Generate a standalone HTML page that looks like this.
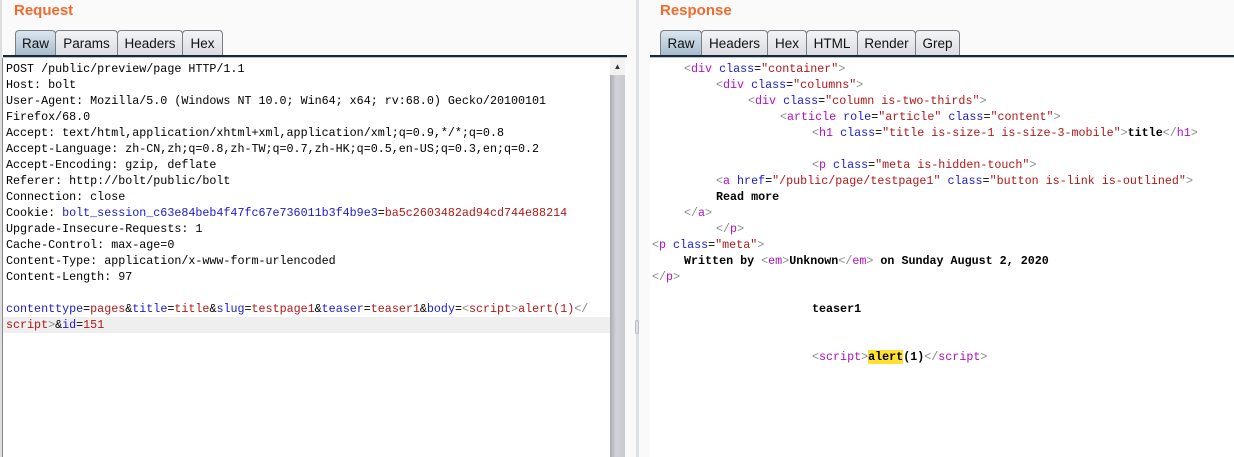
<!DOCTYPE html>
<html><head><style>
body{margin:0;width:1234px;height:457px;background:#fafafa;position:relative;overflow:hidden;font-family:"Liberation Sans",sans-serif}
.t{position:absolute;color:#f26a2e;font-weight:bold;font-size:15px;top:2px}
.tab{position:absolute;top:30px;height:25px;border:1px solid #7a7f86;border-bottom:none;border-radius:4px 4px 0 0;background:linear-gradient(#f4f4f6,#dcdde2);font-size:13.5px;line-height:26px;text-align:center;color:#111;box-sizing:border-box}
.tab.s{background:linear-gradient(#dbe6ef,#a8bccd)}
.bar{position:absolute;top:55px;height:3px;border-top:2px solid #1c2733;background:#b5c7d6;box-sizing:border-box}
.pane{position:absolute;top:58px;bottom:0;background:#fff}
.m{font-family:"Liberation Mono",monospace;font-size:11.7px;line-height:16px;white-space:pre;position:absolute;color:#000}
.b{color:#1b1bd0}.r{color:#b01818}.p{color:#b010c0}.g{color:#888}.k{font-weight:bold}
</style></head><body>
<div class="t" style="left:14px">Request</div>
<div class="t" style="left:660px">Response</div>
<div class="tab s" style="left:15px;width:41px">Raw</div>
<div class="tab" style="left:55px;width:63px">Params</div>
<div class="tab" style="left:117px;width:66px">Headers</div>
<div class="tab" style="left:182px;width:41px">Hex</div>
<div class="bar" style="left:3px;width:624px"></div>
<div class="tab s" style="left:660px;width:42px">Raw</div>
<div class="tab" style="left:701px;width:67px">Headers</div>
<div class="tab" style="left:767px;width:40px">Hex</div>
<div class="tab" style="left:806px;width:52px">HTML</div>
<div class="tab" style="left:857px;width:59px">Render</div>
<div class="tab" style="left:915px;width:45px">Grep</div>
<div class="bar" style="left:650px;width:584px"></div>
<div style="position:absolute;left:0;top:0;width:2px;height:457px;background:#ddd"></div>
<div class="pane" style="left:2px;width:608px;border-left:1px solid #888"></div>
<div style="position:absolute;left:3px;top:317px;width:607px;height:16px;background:#efefef"></div>
<div style="position:absolute;left:610px;top:58px;width:15px;height:399px;background:linear-gradient(90deg,#a9abb0,#d0d2d8 40%,#c8cad0)"></div>
<div style="position:absolute;left:610px;top:58px;width:15px;height:17px;background:#f2f2f2;font-size:8px;text-align:center;line-height:17px;color:#333">▲</div>
<div style="position:absolute;left:636px;top:0;width:3px;height:457px;background:#dde1e8"></div>
<div style="position:absolute;left:635px;top:320px;width:4px;height:14px;border:1px solid #b8bcc4;border-radius:2px;box-sizing:border-box"></div>
<div class="pane" style="left:650px;width:584px"></div>
<div class="m" style="left:6px;top:61px">POST /public/preview/page HTTP/1.1
Host: bolt
User-Agent: Mozilla/5.0 (Windows NT 10.0; Win64; x64; rv:68.0) Gecko/20100101
Firefox/68.0
Accept: text/html,application/xhtml+xml,application/xml;q=0.9,*/*;q=0.8
Accept-Language: zh-CN,zh;q=0.8,zh-TW;q=0.7,zh-HK;q=0.5,en-US;q=0.3,en;q=0.2
Accept-Encoding: gzip, deflate
Referer: http://bolt/public/bolt
Connection: close
Cookie: <span class="b">bolt_session_c63e84beb4f47fc67e736011b3f4b9e3</span>=<span class="r">ba5c2603482ad94cd744e88214</span>
Upgrade-Insecure-Requests: 1
Cache-Control: max-age=0
Content-Type: application/x-www-form-urlencoded
Content-Length: 97

<span class="b">contenttype</span>=<span class="r">pages</span>&amp;<span class="b">title</span>=<span class="r">title</span>&amp;<span class="b">slug</span>=<span class="r">testpage1</span>&amp;<span class="b">teaser</span>=<span class="r">teaser1</span>&amp;<span class="b">body</span>=<span class="r"><span class="g">&lt;</span>script<span class="g">&gt;</span>alert(1)<span class="g">&lt;/</span></span>
<span class="r">script<span class="g">&gt;</span></span>&amp;<span class="b">id</span>=<span class="r">151</span></div>
<div class="m" style="left:684px;top:61px"><span class="g">&lt;</span><span class="p">div</span> <span class="b">class</span>=<span class="r">"container"</span><span class="g">&gt;</span></div>
<div class="m" style="left:716px;top:77px"><span class="g">&lt;</span><span class="p">div</span> <span class="b">class</span>=<span class="r">"columns"</span><span class="g">&gt;</span></div>
<div class="m" style="left:748px;top:93px"><span class="g">&lt;</span><span class="p">div</span> <span class="b">class</span>=<span class="r">"column is-two-thirds"</span><span class="g">&gt;</span></div>
<div class="m" style="left:780px;top:109px"><span class="g">&lt;</span><span class="p">article</span> <span class="b">role</span>=<span class="r">"article"</span> <span class="b">class</span>=<span class="r">"content"</span><span class="g">&gt;</span></div>
<div class="m" style="left:812px;top:125px"><span class="g">&lt;</span><span class="p">h1</span> <span class="b">class</span>=<span class="r">"title is-size-1 is-size-3-mobile"</span><span class="g">&gt;</span><span class="k">title</span><span class="g">&lt;/</span><span class="p">h1</span><span class="g">&gt;</span></div>
<div class="m" style="left:812px;top:157px"><span class="g">&lt;</span><span class="p">p</span> <span class="b">class</span>=<span class="r">"meta is-hidden-touch"</span><span class="g">&gt;</span></div>
<div class="m" style="left:716px;top:173px"><span class="g">&lt;</span><span class="p">a</span> <span class="b">href</span>=<span class="r">"/public/page/testpage1"</span> <span class="b">class</span>=<span class="r">"button is-link is-outlined"</span><span class="g">&gt;</span></div>
<div class="m k" style="left:716px;top:189px">Read more</div>
<div class="m" style="left:684px;top:205px"><span class="g">&lt;/</span><span class="p">a</span><span class="g">&gt;</span></div>
<div class="m" style="left:716px;top:221px"><span class="g">&lt;/</span><span class="p">p</span><span class="g">&gt;</span></div>
<div class="m" style="left:652px;top:237px"><span class="g">&lt;</span><span class="p">p</span> <span class="b">class</span>=<span class="r">"meta"</span><span class="g">&gt;</span></div>
<div class="m" style="left:684px;top:253px"><span class="k">Written by</span> <span class="g">&lt;</span><span class="p">em</span><span class="g">&gt;</span><span class="k">Unknown</span><span class="g">&lt;/</span><span class="p">em</span><span class="g">&gt;</span> <span class="k">on Sunday August 2, 2020</span></div>
<div class="m" style="left:652px;top:269px"><span class="g">&lt;/</span><span class="p">p</span><span class="g">&gt;</span></div>
<div class="m k" style="left:812px;top:301px">teaser1</div>
<div class="m" style="left:812px;top:349px"><span class="g">&lt;</span><span class="p">script</span><span class="g">&gt;</span><span class="k" style="background:#ffe033">alert</span><span class="k">(1)</span><span class="g">&lt;/</span><span class="p">script</span><span class="g">&gt;</span></div>
</body></html>
